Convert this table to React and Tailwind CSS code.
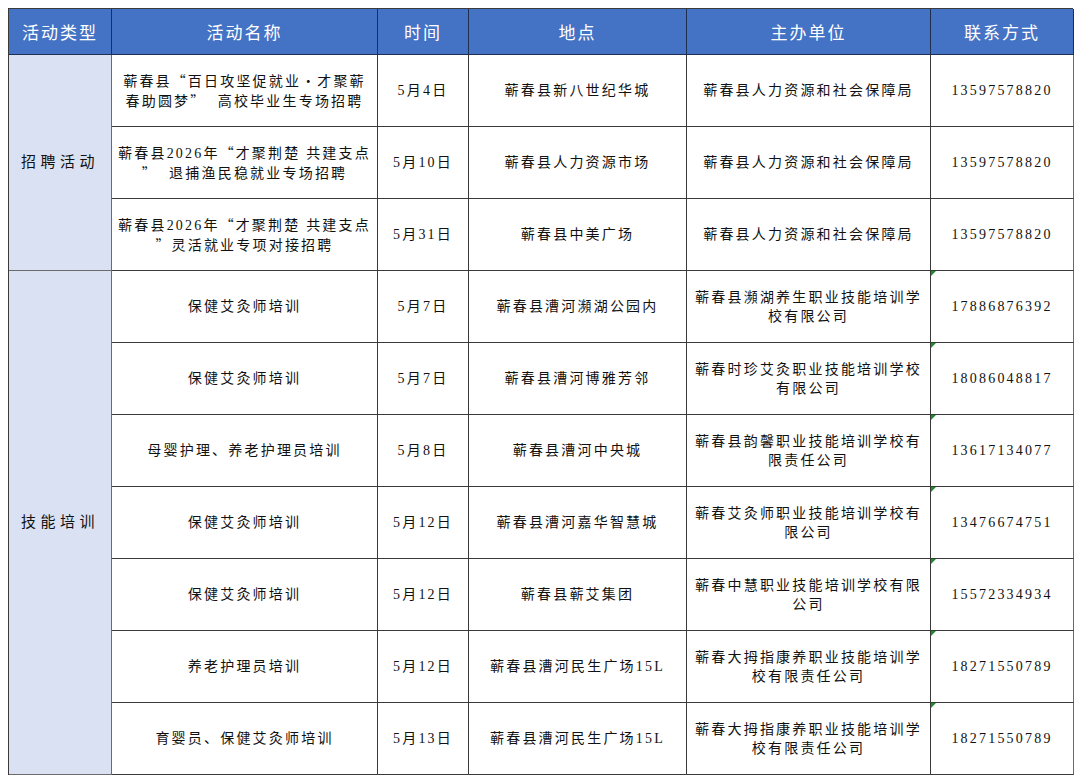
import React from "react";

const recruit = [
  {
    name: ["蕲春县“百日攻坚促就业·才聚蕲", "春助圆梦”  高校毕业生专场招聘"],
    date: "5月4日",
    place: "蕲春县新八世纪华城",
    org: ["蕲春县人力资源和社会保障局"],
    phone: "13597578820",
  },
  {
    name: ["蕲春县2026年“才聚荆楚 共建支点", "”  退捕渔民稳就业专场招聘"],
    date: "5月10日",
    place: "蕲春县人力资源市场",
    org: ["蕲春县人力资源和社会保障局"],
    phone: "13597578820",
  },
  {
    name: ["蕲春县2026年“才聚荆楚 共建支点", "”灵活就业专项对接招聘"],
    date: "5月31日",
    place: "蕲春县中美广场",
    org: ["蕲春县人力资源和社会保障局"],
    phone: "13597578820",
  },
];

const training = [
  { name: ["保健艾灸师培训"], date: "5月7日", place: "蕲春县漕河瀕湖公园内", org: ["蕲春县瀕湖养生职业技能培训学", "校有限公司"], phone: "17886876392" },
  { name: ["保健艾灸师培训"], date: "5月7日", place: "蕲春县漕河博雅芳邻", org: ["蕲春时珍艾灸职业技能培训学校", "有限公司"], phone: "18086048817" },
  { name: ["母婴护理、养老护理员培训"], date: "5月8日", place: "蕲春县漕河中央城", org: ["蕲春县韵馨职业技能培训学校有", "限责任公司"], phone: "13617134077" },
  { name: ["保健艾灸师培训"], date: "5月12日", place: "蕲春县漕河嘉华智慧城", org: ["蕲春艾灸师职业技能培训学校有", "限公司"], phone: "13476674751" },
  { name: ["保健艾灸师培训"], date: "5月12日", place: "蕲春县蕲艾集团", org: ["蕲春中慧职业技能培训学校有限", "公司"], phone: "15572334934" },
  { name: ["养老护理员培训"], date: "5月12日", place: "蕲春县漕河民生广场15L", org: ["蕲春大拇指康养职业技能培训学", "校有限责任公司"], phone: "18271550789" },
  { name: ["育婴员、保健艾灸师培训"], date: "5月13日", place: "蕲春县漕河民生广场15L", org: ["蕲春大拇指康养职业技能培训学", "校有限责任公司"], phone: "18271550789" },
];

const cell =
  "flex items-center justify-center text-center border-r border-b border-[#3a3a3a] bg-white text-[14px] leading-[19px] tracking-[2.2px] text-[#111]";

// quotes and the middle dot are full width in the source sheet
function Text({ s }) {
  return s.split(/([“”·])/).map((part, i) =>
    /^[“”·]$/.test(part) ? (
      <span key={i} className="inline-block w-[16px] text-center" style={{ fontFamily: '"Noto Sans CJK SC", sans-serif' }}>
        {part}
      </span>
    ) : (
      <span key={i}>{part}</span>
    )
  );
}

function Lines({ lines }) {
  return (
    <div>
      {lines.map((l, i) => (
        <div key={i} className="whitespace-pre">
          <Text s={l} />
        </div>
      ))}
    </div>
  );
}

function Row({ r, flag }) {
  return (
    <>
      <div className={cell}><Lines lines={r.name} /></div>
      <div className={`${cell} tracking-[1.8px]`}>{r.date}</div>
      <div className={cell}>{r.place}</div>
      <div className={cell}><Lines lines={r.org} /></div>
      <div className={`${cell} relative tracking-[1.8px] border-r-[#6b6b6b]`}>
        {flag && (
          <span className="absolute left-0 top-0 w-0 h-0 border-t-[5px] border-t-[#1e8c2e] border-r-[5px] border-r-transparent" />
        )}
        {r.phone}
      </div>
    </>
  );
}

export default function App() {
  const head = ["活动类型", "活动名称", "时间", "地点", "主办单位", "联系方式"];
  return (
    <div className="w-[1080px] h-[783px] bg-white pt-[8px] pl-[8px]" style={{ fontFamily: '"Liberation Serif", "Noto Sans CJK SC", serif' }}>
      <div className="grid grid-cols-[103px_266px_91px_218px_244px_143px] grid-rows-[46px_repeat(10,72px)] w-[1065px] border-l border-t border-[#3a3a3a]">
        {head.map((h) => (
          <div
            key={h}
            className="flex items-center justify-center bg-[#4472C4] text-white text-[17px] tracking-[2px] border-r border-b border-[#1f2f4f]"
            style={{ fontFamily: '"Noto Sans CJK SC", sans-serif' }}
          >
            {h}
          </div>
        ))}
        <div className="row-span-3 flex items-center justify-center bg-[#D9E1F2] border-r border-b border-[#6b6b6b] text-[15px] tracking-[4.5px] text-[#111]">
          招聘活动
        </div>
        {recruit.map((r, i) => (
          <Row key={"r" + i} r={r} flag={false} />
        ))}
        <div className="row-span-7 col-start-1 row-start-5 flex items-center justify-center bg-[#D9E1F2] border-r border-b border-[#6b6b6b] text-[15px] tracking-[4.5px] text-[#111]">
          技能培训
        </div>
        {training.map((r, i) => (
          <Row key={"t" + i} r={r} flag={true} />
        ))}
      </div>
    </div>
  );
}
